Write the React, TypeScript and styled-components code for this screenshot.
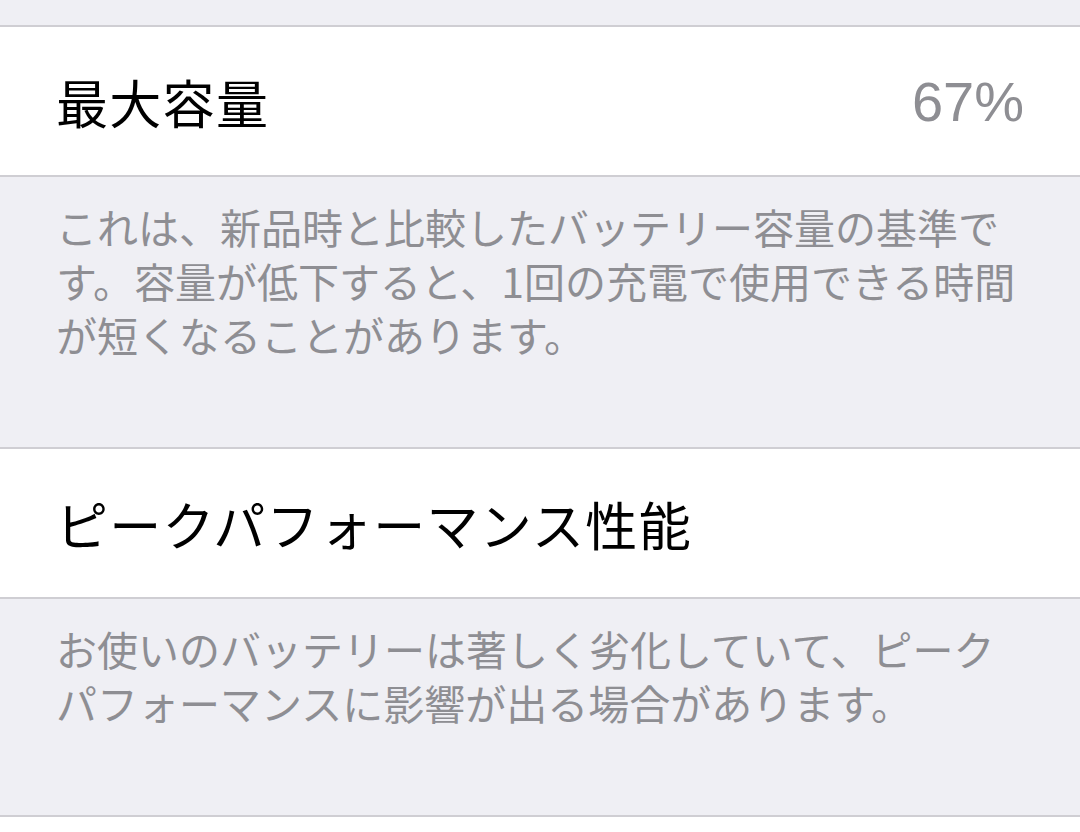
import styled, { createGlobalStyle } from "styled-components";

const GlobalStyle = createGlobalStyle`
  html,
  body {
    margin: 0;
    padding: 0;
    background: #efeff4;
  }

  body {
    font-family: "Noto Sans CJK JP", "Noto Sans", sans-serif;
    -webkit-font-smoothing: antialiased;
  }
`;

const Screen = styled.div`
  display: flex;
  flex-direction: column;
  min-height: 832px;
  padding-top: 25px;
  background: #efeff4;
  overflow: hidden;
`;

const Group = styled.section`
  display: flex;
  flex-direction: column;
`;

const Cell = styled.div`
  display: flex;
  align-items: center;
  justify-content: space-between;
  height: 148px;
  padding: 0 56px;
  background: #ffffff;
  border-top: 2px solid #cfced3;
  border-bottom: 2px solid #cfced3;
`;

const Title = styled.span`
  font-size: 52px;
  color: #000000;
  letter-spacing: 1.3px;
`;

const Value = styled.span`
  font-family: "Liberation Sans", Arial, sans-serif;
  font-size: 56px;
  color: #8e8e93;
`;

const Footer = styled.p<{ $lines: number }>`
  margin: 0;
  padding: 22px 56px 0;
  height: ${(p) => p.$lines * 54 + 86}px;
  font-size: 41px;
  line-height: 54px;
  color: #8e8e93;
  word-break: normal;
  line-break: strict;
`;

const Trailing = styled.div`
  flex: 1;
  min-height: 20px;
  background: #ffffff;
  border-top: 2px solid #cfced3;
`;

export default function App() {
  return (
    <>
      <GlobalStyle />
      <Screen>
        <Group>
          <Cell>
            <Title>最大容量</Title>
            <Value>67%</Value>
          </Cell>
          <Footer $lines={3}>
            これは、新品時と比較したバッテリー容量の基準です。容量が低下すると、1回の充電で使用できる時間が短くなることがあります。
          </Footer>
        </Group>

        <Group>
          <Cell>
            <Title>ピークパフォーマンス性能</Title>
          </Cell>
          <Footer $lines={2}>
            お使いのバッテリーは著しく劣化していて、ピークパフォーマンスに影響が出る場合があります。
          </Footer>
        </Group>

        <Trailing />
      </Screen>
    </>
  );
}
